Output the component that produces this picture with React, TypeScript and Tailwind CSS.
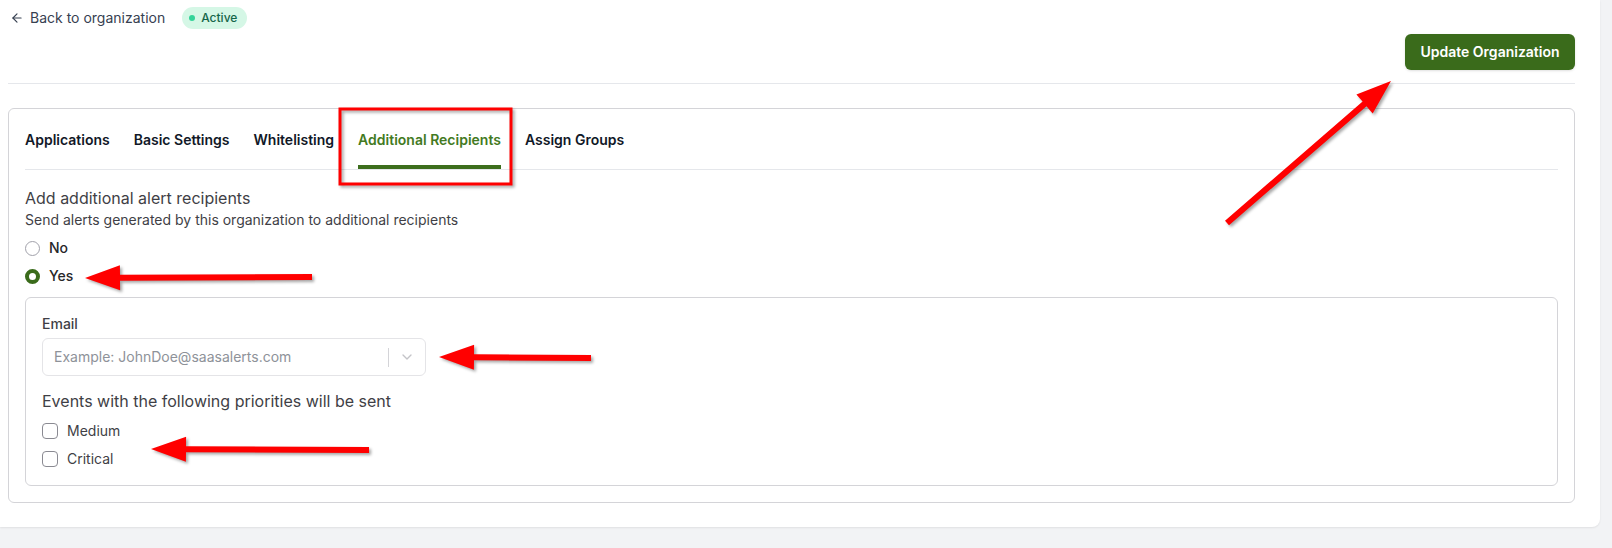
import { ArrowLeft, ChevronDown } from "lucide-react";

type Pt = [number, number];

const arrowPoints = (tail: Pt, tip: Pt, headLen: number, headHalf: number, shaftHalf: number) => {
  const dx = tip[0] - tail[0];
  const dy = tip[1] - tail[1];
  const len = Math.hypot(dx, dy);
  const ux = dx / len;
  const uy = dy / len;
  const nx = -uy;
  const ny = ux;
  const bx = tip[0] - ux * headLen;
  const by = tip[1] - uy * headLen;
  const pts: Pt[] = [
    [tail[0] + nx * shaftHalf, tail[1] + ny * shaftHalf],
    [bx + nx * shaftHalf, by + ny * shaftHalf],
    [bx + nx * headHalf, by + ny * headHalf],
    tip,
    [bx - nx * headHalf, by - ny * headHalf],
    [bx - nx * shaftHalf, by - ny * shaftHalf],
    [tail[0] - nx * shaftHalf, tail[1] - ny * shaftHalf],
  ];
  return pts.map((p) => `${p[0].toFixed(1)},${p[1].toFixed(1)}`).join(" ");
};

const arrows: { tail: Pt; tip: Pt }[] = [
  { tail: [1227, 223], tip: [1391, 81] },
  { tail: [312, 277], tip: [85, 278] },
  { tail: [591, 358], tip: [439, 357] },
  { tail: [369, 450], tip: [151, 449] },
];

const tabs = ["Applications", "Basic Settings", "Whitelisting", "Additional Recipients", "Assign Groups"];

const Annotations = () => (
  <svg
    className="pointer-events-none absolute left-0 top-0"
    width="1612"
    height="548"
    viewBox="0 0 1612 548"
    style={{ filter: "drop-shadow(2px 2px 1.5px rgba(0,0,0,0.35))" }}
  >
    <rect x="340" y="109" width="171" height="75" fill="none" stroke="#ff0000" strokeWidth="3" />
    {arrows.map((a, i) => (
      <polygon key={i} points={arrowPoints(a.tail, a.tip, 35, 12.5, 3)} fill="#ff0000" />
    ))}
  </svg>
);

export default function App() {
  return (
    <div
      className="relative h-[548px] w-[1612px] overflow-hidden bg-[#f2f3f5]"
      style={{ fontFamily: "Inter, 'Noto Sans', sans-serif" }}
    >
      <div className="h-[527px] w-[1600px] rounded-br-lg bg-white pl-2 pr-[25px] shadow-[0_1px_2px_rgba(0,0,0,0.08)]">
        {/* header */}
        <div className="border-b border-[#e5e7eb] pb-[13px] pt-[7px]">
          <div className="flex h-[22px] items-center">
            <a className="flex items-center gap-[6px] pl-[2px] text-sm text-[#374151]">
              <ArrowLeft size={14} strokeWidth={2} />
              <span>Back to organization</span>
            </a>
            <span className="ml-[17px] flex h-[22px] items-center gap-[6px] rounded-full bg-[#d5f7e6] pl-[7px] pr-[10px] text-xs font-medium text-[#14664a]">
              <span className="h-[6px] w-[6px] rounded-full bg-[#34d399]" />
              Active
            </span>
          </div>
          <div className="mt-[5px] flex justify-end">
            <button className="h-9 w-[170px] rounded-md bg-[#3a6b1b] text-sm font-semibold text-white shadow-sm">
              Update Organization
            </button>
          </div>
        </div>

        {/* card */}
        <div className="mt-6 rounded-md border border-[#d4d4d8] p-4">
          <div className="flex gap-6 border-b border-[#e5e7eb]">
            {tabs.map((t) => {
              const active = t === "Additional Recipients";
              return (
                <div
                  key={t}
                  className={
                    active
                      ? "border-b-4 border-[#3d6e1d] pb-[15px] pt-[5px] text-sm font-semibold text-[#437a22]"
                      : "border-b-4 border-transparent pb-[15px] pt-[5px] text-sm font-semibold text-[#111827]"
                  }
                >
                  {t}
                </div>
              );
            })}
          </div>

          <div className="mt-4 text-base text-[#3f3f46]">Add additional alert recipients</div>
          <div className="text-sm text-[#3f3f46]">Send alerts generated by this organization to additional recipients</div>

          <div className="mt-2 flex flex-col gap-2">
            <label className="flex h-5 items-center gap-[9px] text-sm font-medium text-[#27272a]">
              <span className="h-[15px] w-[15px] rounded-full border border-[#a1a1aa] bg-white" />
              No
            </label>
            <label className="flex h-5 items-center gap-[9px] text-sm font-medium text-[#27272a]">
              <span className="h-[15px] w-[15px] rounded-full border-[4px] border-[#3a6b1b] bg-white" />
              Yes
            </label>
          </div>

          <div className="mt-[11px] rounded-md border border-[#d4d4d8] p-4">
            <div className="mb-1 text-sm font-medium text-[#3f3f46]">Email</div>
            <div className="flex h-[38px] w-[384px] items-center rounded-md border border-[#e4e4e7] bg-white">
              <span className="flex-1 pl-[11px] text-sm text-[#8e9299]">Example: JohnDoe@saasalerts.com</span>
              <span className="h-[19px] w-px bg-[#d4d4d8]" />
              <span className="flex w-9 items-center justify-center text-[#c4c4c8]">
                <ChevronDown size={16} strokeWidth={2} />
              </span>
            </div>

            <div className="mt-[13px] text-base text-[#3f3f46]">Events with the following priorities will be sent</div>

            <div className="mt-2 flex flex-col gap-2">
              {["Medium", "Critical"].map((p) => (
                <label key={p} className="flex h-5 items-center gap-[9px] text-sm text-[#3f3f46]">
                  <span className="h-4 w-4 rounded-[4px] border border-[#8a8a92] bg-white" />
                  {p}
                </label>
              ))}
            </div>
          </div>
        </div>
      </div>
      <Annotations />
    </div>
  );
}
